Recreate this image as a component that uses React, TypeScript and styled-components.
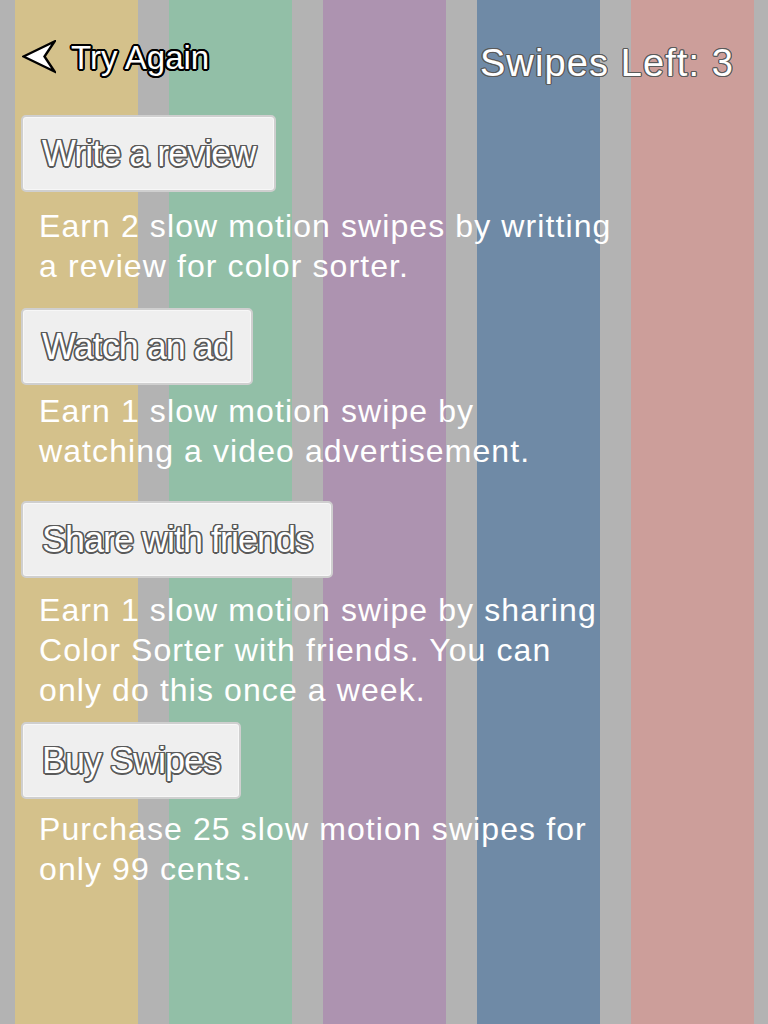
import React from "react";
import styled, { createGlobalStyle } from "styled-components";

const outline = (width: number, color: string) => {
  const steps = 16;
  const shadows: string[] = [];
  for (let i = 0; i < steps; i++) {
    const a = (i / steps) * Math.PI * 2;
    const x = (Math.cos(a) * width).toFixed(2);
    const y = (Math.sin(a) * width).toFixed(2);
    shadows.push(`${x}px ${y}px 0 ${color}`);
  }
  return shadows.join(", ");
};

const GlobalStyle = createGlobalStyle`
  html, body {
    margin: 0;
    padding: 0;
  }
  body {
    font-family: "Liberation Sans", Arial, Helvetica, sans-serif;
  }
`;

const Page = styled.div`
  width: 768px;
  min-height: 1024px;
  box-sizing: border-box;
  overflow: hidden;
  background: linear-gradient(
    to right,
    #b3b3b3 0 15px,
    #d4c18b 15px 138px,
    #b3b3b3 138px 169px,
    #92bfa7 169px 292px,
    #b3b3b3 292px 323px,
    #ad93b0 323px 446px,
    #b3b3b3 446px 477px,
    #6f8aa6 477px 600px,
    #b3b3b3 600px 631px,
    #cc9e9a 631px 754px,
    #b3b3b3 754px 768px
  );
`;

const Header = styled.div`
  display: flex;
  justify-content: space-between;
  align-items: flex-start;
  padding: 41px 34px 0 22px;
`;

const BackLink = styled.div`
  display: flex;
  align-items: center;
  gap: 15px;
  color: #fff;
  font-size: 33px;
  line-height: 1;
  letter-spacing: 0;
  text-shadow: ${outline(2, "#000")};
`;

const SwipesLeft = styled.div`
  margin-top: 3px;
  color: #fff;
  font-size: 38px;
  line-height: 1;
  letter-spacing: 1.1px;
  text-shadow: ${outline(1.2, "rgba(90, 90, 90, 0.85)")};
`;

const List = styled.div`
  display: flex;
  flex-direction: column;
  padding: 0 0 0 21px;
`;

const Item = styled.div<{ $top: number; $gap: number }>`
  display: flex;
  flex-direction: column;
  align-items: flex-start;
  gap: ${(p) => p.$gap}px;
  margin-top: ${(p) => p.$top}px;
`;

const ActionButton = styled.button`
  display: flex;
  align-items: center;
  height: 77px;
  box-sizing: border-box;
  padding: 0 19px;
  margin: 0;
  border: 2px solid #cfcfcf;
  border-radius: 5px;
  background: #efefef;
  box-shadow: inset 0 0 0 1px #f7f7f7;
  font-family: "Liberation Sans", Arial, Helvetica, sans-serif;
  font-size: 36px;
  line-height: 1;
  letter-spacing: -1px;
  color: #fff;
  text-shadow: ${outline(1.5, "#5a5a5a")};
  white-space: nowrap;
  cursor: pointer;
`;

const Description = styled.p`
  margin: 0 0 0 18px;
  color: #fff;
  font-size: 32px;
  line-height: 40px;
  letter-spacing: 1.1px;
  white-space: nowrap;
`;

const BackArrow = () => (
  <svg width="34" height="34" viewBox="-1.5 -1.5 34 34" style={{ marginTop: -2 }}>
    <polygon
      points="0,15 31,0 21,15 31,30"
      fill="#fff"
      stroke="#000"
      strokeWidth="2.4"
      strokeLinejoin="miter"
    />
  </svg>
);

type Offer = {
  label: string;
  lines: string[];
  top: number;
  gap: number;
};

const offers: Offer[] = [
  {
    label: "Write a review",
    lines: ["Earn 2 slow motion swipes by writting", "a review for color sorter."],
    top: 33,
    gap: 14,
  },
  {
    label: "Watch an ad",
    lines: ["Earn 1 slow motion swipe by", "watching a video advertisement."],
    top: 22,
    gap: 6,
  },
  {
    label: "Share with friends",
    lines: [
      "Earn 1 slow motion swipe by sharing",
      "Color Sorter with friends. You can",
      "only do this once a week.",
    ],
    top: 30,
    gap: 12,
  },
  {
    label: "Buy Swipes",
    lines: ["Purchase 25 slow motion swipes for", "only 99 cents."],
    top: 12,
    gap: 10,
  },
];

export default function App() {
  return (
    <Page>
      <GlobalStyle />
      <Header>
        <BackLink>
          <BackArrow />
          Try Again
        </BackLink>
        <SwipesLeft>Swipes Left: 3</SwipesLeft>
      </Header>

      <List>
        {offers.map((offer) => (
          <Item key={offer.label} $top={offer.top} $gap={offer.gap}>
            <ActionButton>{offer.label}</ActionButton>
            <Description>
              {offer.lines.map((line, i) => (
                <React.Fragment key={i}>
                  {i > 0 && <br />}
                  {line}
                </React.Fragment>
              ))}
            </Description>
          </Item>
        ))}
      </List>
    </Page>
  );
}
